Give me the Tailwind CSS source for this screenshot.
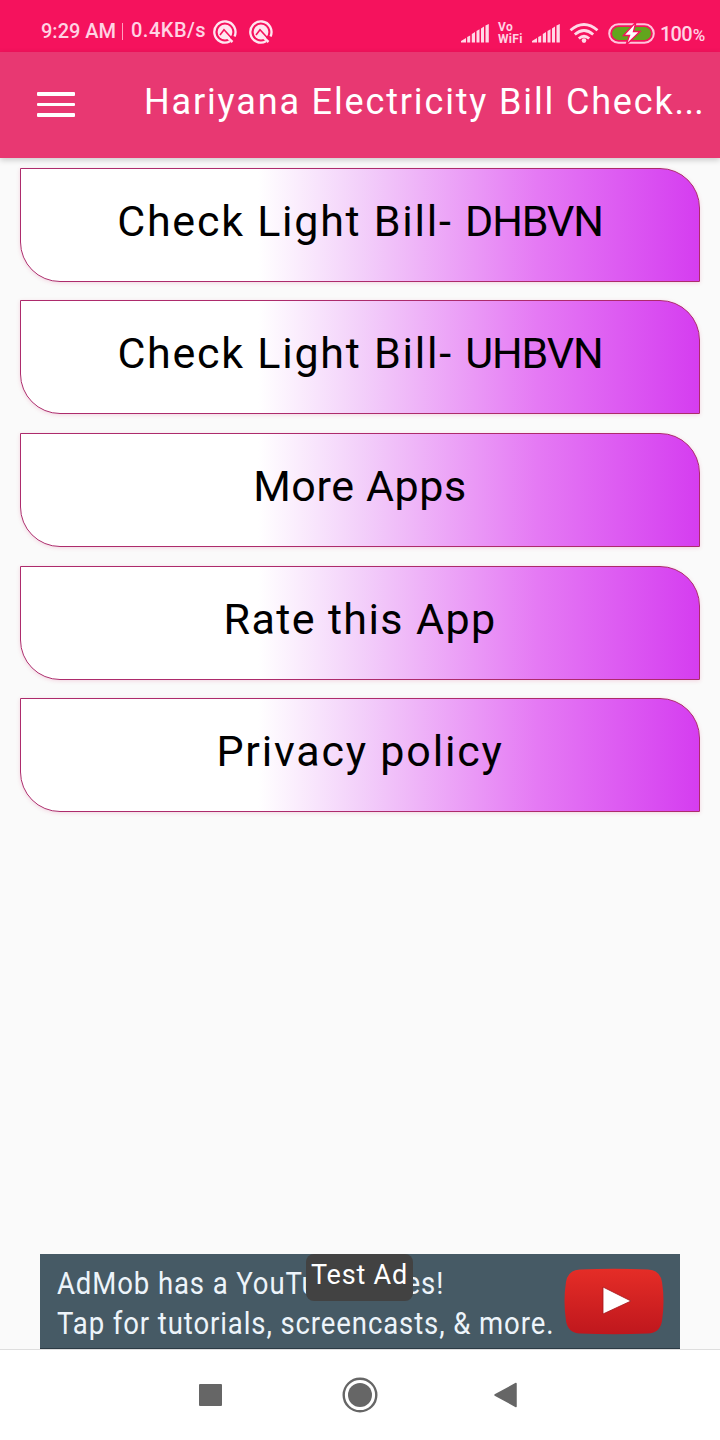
<!DOCTYPE html>
<html lang="en">
<head>
  <meta charset="utf-8">
  <title>Hariyana Electricity Bill Check</title>
  <script src="https://cdn.jsdelivr.net/npm/@tailwindcss/browser@4"></script>
</head>
<body class="bg-[#fafafa]">
  <div class="flex flex-col w-[720px] h-[1440px] overflow-hidden font-['Roboto',sans-serif]">

    <!-- Status bar -->
    <div class="flex items-start h-[52px] shrink-0 pl-[41px] bg-[#f5125d] text-[#ffd3e4] text-[20px] leading-[24px] whitespace-nowrap">
      <div class="w-[76px] mt-[19px] font-medium">9:29 AM</div>
      <div class="w-px h-[17px] ml-[5px] mt-[23px] bg-[#ffa0c0]"></div>
      <div class="w-[76px] ml-[8px] mt-[18px] font-medium tracking-[0.5px]">0.4KB/s</div>
      <svg class="w-[24px] h-[24px] ml-[6px] mt-[20px]" viewBox="0 0 24 24" fill="none">
        <path d="M17 21.300A10.600 10.600 0 1 1 21.500 16.500" stroke="#ffe6f0" stroke-width="2.300"/>
        <circle cx="12" cy="12" r="7.400" fill="#ffe6f0"/>
        <path d="M7 15L11 9.800 19 18.500" stroke="#f5125d" stroke-width="1.600"/>
        <path d="M13.500 16.500L19.500 22" stroke="#ffe6f0" stroke-width="2.400"/>
      </svg>
      <svg class="w-[24px] h-[24px] ml-[12px] mt-[20px]" viewBox="0 0 24 24" fill="none">
        <path d="M17 21.300A10.600 10.600 0 1 1 21.500 16.500" stroke="#ffe6f0" stroke-width="2.300"/>
        <circle cx="12" cy="12" r="7.400" fill="#ffe6f0"/>
        <path d="M7 15L11 9.800 19 18.500" stroke="#f5125d" stroke-width="1.600"/>
        <path d="M13.500 16.500L19.500 22" stroke="#ffe6f0" stroke-width="2.400"/>
      </svg>
      <svg class="w-[28px] h-[19px] ml-[188px] mt-[24px]" viewBox="0 0 28 19" fill="#ffd9e7">
        <path d="M0 18.500V17L5 14V18.500ZM6.200 18.500V13L9.200 11.500V18.500ZM10.800 18.500V10L14 8V18.500ZM15.500 18.500V7L18.500 5.200V18.500ZM20 18.500V4.500L23 2.500V18.500ZM24.500 18.500V1.500L27.800 0V18.500Z"/>
      </svg>
      <div class="w-[26px] ml-[9px] mt-[22px] text-[12px] leading-[11.500px] font-bold"><div class="tracking-[0.5px]">Vo</div><div class="tracking-[0.300px]">WiFi</div></div>
      <svg class="w-[28px] h-[19px] ml-[8px] mt-[24px]" viewBox="0 0 28 19" fill="#ffd9e7">
        <path d="M0 18.500V17L5 14V18.500ZM6.200 18.500V13L9.200 11.500V18.500ZM10.800 18.500V10L14 8V18.500ZM15.500 18.500V7L18.500 5.200V18.500ZM20 18.500V4.500L23 2.500V18.500ZM24.500 18.500V1.500L27.800 0V18.500Z"/>
      </svg>
      <svg class="w-[30px] h-[20px] ml-[9px] mt-[23px]" viewBox="0 0 30 20" fill="none" stroke="#ffd9e7" stroke-width="2.800">
        <path d="M1.500 7.300Q15-4.300 28.500 7.300M5.800 11.500Q15 3.500 24.200 11.500M9.800 15.500Q15 11 20.200 15.500"/>
        <circle cx="15" cy="17.600" r="2.300" fill="#ffd9e7" stroke="none"/>
      </svg>
      <svg class="w-[47px] h-[21px] ml-[9px] mt-[23px]" viewBox="0 0 47 21">
        <rect x="1.200" y="1.200" width="44.600" height="18.600" rx="9.300" fill="none" stroke="#ffc4dc" stroke-width="2"/>
        <rect x="4" y="4" width="39" height="13" rx="6.500" fill="#62a51d"/>
        <path d="M28-1L15.500 12.500H21.500L18 22 32 8.500H25.500Z" fill="#fff" stroke="#f5125d" stroke-width="1.400"/>
      </svg>
      <div class="ml-[5px] mt-[22px] font-medium tracking-[-0.8px]">100<span class="ml-px text-[17px]">%</span></div>
    </div>

    <!-- App bar -->
    <div class="relative flex items-start h-[106px] shrink-0 pl-[37px] bg-[#e83872] text-white shadow-[0_2px_6px_rgba(0,0,0,0.2)] whitespace-nowrap">
      <div class="flex flex-col gap-[7px] mt-[40px] w-[38px]">
        <div class="h-[3.500px] rounded-[1px] bg-white"></div>
        <div class="h-[3.500px] rounded-[1px] bg-white"></div>
        <div class="h-[3.500px] rounded-[1px] bg-white"></div>
      </div>
      <h1 class="ml-[69px] mt-[28px] text-[36px] leading-[44px] tracking-[1.850px]">Hariyana Electricity Bill Check<span class="tracking-[0.3px]">...</span></h1>
    </div>

    <!-- Menu -->
    <div class="flex flex-col gap-[18.700px] px-[20px] pt-[9.500px] grow text-black text-[43px] leading-[48px] whitespace-nowrap">
      <div class="flex justify-center h-[114px] shrink-0 pt-[28px] border border-[#ad2b6c] rounded-tr-[40px] rounded-bl-[40px] bg-linear-[90deg,#fff_35%,#f3d0fa_50%,#e57af4_76%,#d53df0] shadow-[0_1px_4px_rgba(200,0,80,0.15)] tracking-[1.750px]"><span>Check Light Bill- <span class="tracking-[-1.100px]">DHBVN</span></span></div>
      <div class="flex justify-center h-[114px] shrink-0 pt-[28px] border border-[#ad2b6c] rounded-tr-[40px] rounded-bl-[40px] bg-linear-[90deg,#fff_35%,#f3d0fa_50%,#e57af4_76%,#d53df0] shadow-[0_1px_4px_rgba(200,0,80,0.15)] tracking-[1.750px]"><span>Check Light Bill- <span class="tracking-[-1.100px]">UHBVN</span></span></div>
      <div class="flex justify-center h-[114px] shrink-0 pt-[28px] border border-[#ad2b6c] rounded-tr-[40px] rounded-bl-[40px] bg-linear-[90deg,#fff_35%,#f3d0fa_50%,#e57af4_76%,#d53df0] shadow-[0_1px_4px_rgba(200,0,80,0.15)] tracking-[0.600px]">More Apps</div>
      <div class="flex justify-center h-[114px] shrink-0 pt-[28px] border border-[#ad2b6c] rounded-tr-[40px] rounded-bl-[40px] bg-linear-[90deg,#fff_35%,#f3d0fa_50%,#e57af4_76%,#d53df0] shadow-[0_1px_4px_rgba(200,0,80,0.15)] tracking-[1.400px]">Rate this App</div>
      <div class="flex justify-center h-[114px] shrink-0 pt-[28px] border border-[#ad2b6c] rounded-tr-[40px] rounded-bl-[40px] bg-linear-[90deg,#fff_35%,#f3d0fa_50%,#e57af4_76%,#d53df0] shadow-[0_1px_4px_rgba(200,0,80,0.15)] tracking-[1.800px]">Privacy policy</div>
    </div>

    <!-- Ad banner -->
    <div class="relative flex h-[95px] shrink-0 mx-[40px] bg-[#465a65] border-b border-[#2b3a44] text-[#edf4fa] text-[32px] leading-[40px] whitespace-nowrap">
      <div class="w-[524px] pl-[17px] pt-[9px]">
        <div class="origin-left scale-x-[0.86] tracking-[1.050px]">AdMob has a YouTube series!</div>
        <div class="origin-left scale-x-[0.86] tracking-[1.050px]">Tap for tutorials, screencasts, &amp; more.</div>
      </div>
      <svg class="w-[100px] h-[67px] mt-[14px]" viewBox="0 0 100 67">
        <defs><linearGradient id="red" x2="0" y2="1"><stop stop-color="#e52d27"/><stop offset="1" stop-color="#bf171d"/></linearGradient></defs>
        <path d="M16 1.500Q50 0 84 1.500 96 2 98 14 101 33 98 53 96 65 84 65.500 50 67 16 65.500 4 65 2 53-1 33 2 14 4 2 16 1.500Z" fill="url(#red)"/>
        <path d="M39 19L67 33 39 46Z" fill="#fff" stroke="#a5141a" stroke-width="0.800"/>
      </svg>
      <div class="absolute left-[266px] top-0 w-[107px] h-[47px] rounded-[8px] bg-[#424242] text-white text-[27px] leading-[43px] text-center tracking-[0.8px]">Test Ad</div>
    </div>

    <!-- Navigation bar -->
    <div class="flex items-center h-[91px] shrink-0 pl-[199px] bg-white border-t border-[#dedede]">
      <svg class="w-[23px] h-[22px]" viewBox="0 0 23 22" fill="#666"><rect width="23" height="22" rx="1"/></svg>
      <svg class="w-[36px] h-[36px] ml-[119.500px]" viewBox="0 0 36 36"><circle cx="18" cy="18" r="16.300" fill="none" stroke="#666" stroke-width="2.400"/><circle cx="18" cy="18" r="12" fill="#666"/></svg>
      <svg class="w-[23px] h-[26px] ml-[116px]" viewBox="0 0 23 26" fill="#666" stroke="#666" stroke-width="1.500" stroke-linejoin="round"><path d="M1 13L22 1.500V24.500Z"/></svg>
    </div>
  </div>
</body>
</html>
